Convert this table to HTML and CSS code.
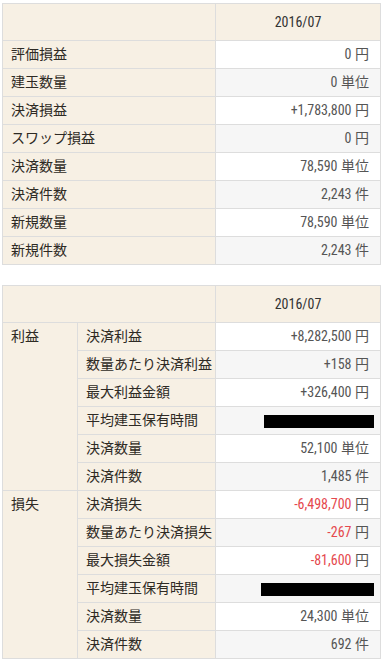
FILE: index.html
```html
<!DOCTYPE html>
<html lang="ja">
<head>
<meta charset="utf-8">
<title>月次レポート</title>
<link rel="stylesheet" href="styles.css">
</head>
<body>
<div class="page">
  <table class="report report-summary">
    <colgroup><col class="c-label"><col class="c-value"></colgroup>
    <thead>
      <tr><th class="corner"></th><th class="month">2016/07</th></tr>
    </thead>
    <tbody>
      <tr><th class="label">評価損益</th><td class="value"><span class="num">0</span> 円</td></tr>
      <tr><th class="label">建玉数量</th><td class="value"><span class="num">0</span> 単位</td></tr>
      <tr><th class="label">決済損益</th><td class="value"><span class="num">+1,783,800</span> 円</td></tr>
      <tr><th class="label">スワップ損益</th><td class="value"><span class="num">0</span> 円</td></tr>
      <tr><th class="label">決済数量</th><td class="value"><span class="num">78,590</span> 単位</td></tr>
      <tr><th class="label">決済件数</th><td class="value"><span class="num">2,243</span> 件</td></tr>
      <tr><th class="label">新規数量</th><td class="value"><span class="num">78,590</span> 単位</td></tr>
      <tr><th class="label">新規件数</th><td class="value"><span class="num">2,243</span> 件</td></tr>
    </tbody>
  </table>

  <table class="report report-detail">
    <colgroup><col class="c-group"><col class="c-sub"><col class="c-value"></colgroup>
    <thead>
      <tr><th class="corner" colspan="2"></th><th class="month">2016/07</th></tr>
    </thead>
    <tbody>
      <tr><th class="group" rowspan="6">利益</th><th class="label">決済利益</th><td class="value"><span class="num">+8,282,500</span> 円</td></tr>
      <tr><th class="label">数量あたり決済利益</th><td class="value"><span class="num">+158</span> 円</td></tr>
      <tr><th class="label">最大利益金額</th><td class="value"><span class="num">+326,400</span> 円</td></tr>
      <tr><th class="label">平均建玉保有時間</th><td class="value"><span class="redact redact-a"></span></td></tr>
      <tr><th class="label">決済数量</th><td class="value"><span class="num">52,100</span> 単位</td></tr>
      <tr><th class="label">決済件数</th><td class="value"><span class="num">1,485</span> 件</td></tr>
      <tr><th class="group" rowspan="6">損失</th><th class="label">決済損失</th><td class="value"><span class="num neg">-6,498,700</span> 円</td></tr>
      <tr><th class="label">数量あたり決済損失</th><td class="value"><span class="num neg">-267</span> 円</td></tr>
      <tr><th class="label">最大損失金額</th><td class="value"><span class="num neg">-81,600</span> 円</td></tr>
      <tr><th class="label">平均建玉保有時間</th><td class="value"><span class="redact redact-b"></span></td></tr>
      <tr><th class="label">決済数量</th><td class="value"><span class="num">24,300</span> 単位</td></tr>
      <tr><th class="label">決済件数</th><td class="value"><span class="num">692</span> 件</td></tr>
    </tbody>
  </table>
</div>
</body>
</html>
```

FILE: styles.css
```css
html, body {
  margin: 0;
  padding: 0;
  background: #ffffff;
}

.page {
  padding: 3px 0 0 2px;
  font-family: Roboto, "Noto Sans CJK JP", sans-serif;
  font-size: 14px;
  color: #333333;
}

.report {
  width: 378px;
  table-layout: fixed;
  border-collapse: collapse;
  border: 1px solid #dddddd;
  margin: 0 0 20px 0;
}

.c-label { width: 213px; }
.c-group { width: 75px; }
.c-sub { width: 138px; }
.c-value { width: 165px; }

.report th,
.report td {
  border: 1px solid #dddddd;
  padding: 4px 8px;
  line-height: 19px;
  font-weight: normal;
  text-align: left;
  white-space: nowrap;
}

.report thead th {
  background: #f7f0e4;
  height: 28px;
  padding-top: 4px;
  padding-bottom: 4px;
}

.report .month {
  text-align: center;
  color: #333333;
  font-stretch: condensed;
}

.report .label,
.report .group {
  background: #f7f0e4;
  color: #2e2a24;
}

.report .group {
  vertical-align: top;
}

.report .value {
  text-align: right;
  padding-right: 11px;
  color: #555555;
  background: #ffffff;
}

.report tbody tr:nth-child(even) .value {
  background: #f6f6f6;
}

.num {
  font-stretch: condensed;
}

.neg {
  color: #e5484d;
}

.redact {
  display: inline-block;
  height: 13px;
  background: #000000;
  vertical-align: middle;
  margin-right: -5px;
}

.redact-a { width: 110px; }
.redact-b { width: 113px; }
```
